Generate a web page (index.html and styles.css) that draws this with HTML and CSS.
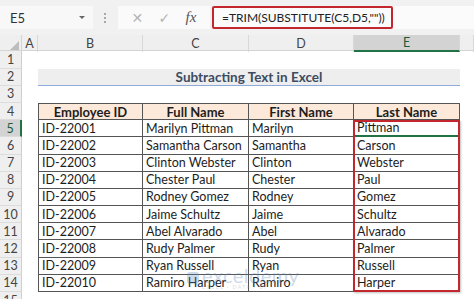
FILE: index.html
```html
<!DOCTYPE html>
<html lang="en">
<head>
  <meta charset="UTF-8">
  <meta name="viewport" content="width=device-width, initial-scale=1.0">
  <title>Subtracting Text in Excel</title>
  <link rel="stylesheet" href="styles.css">
</head>
<body>
  <div class="formula-bar">
    <div class="name-box">
      <span>E5</span>
      <span class="caret"></span>
    </div>
    <div class="grip"><i></i><i></i><i></i></div>
    <div class="fx-buttons">
      <span class="btn-x">&#x2715;</span>
      <span class="btn-ok">&#x2713;</span>
      <span class="btn-fx">fx</span>
    </div>
    <div class="formula-input">
      <span class="formula">=TRIM(SUBSTITUTE(C5,D5,""))</span>
    </div>
  </div>

  <div class="sheet">
    <div class="row col-heads">
      <div class="corner"><span></span></div>
      <div class="ch">A</div>
      <div class="ch">B</div>
      <div class="ch">C</div>
      <div class="ch">D</div>
      <div class="ch active">E</div>
      <div class="ch"></div>
    </div>

    <div class="row"><div class="rh">1</div></div>
    <div class="row">
      <div class="rh">2</div><div></div>
      <div class="title">Subtracting Text in Excel</div>
    </div>
    <div class="row"><div class="rh">3</div></div>

    <div class="row">
      <div class="rh">4</div><div></div>
      <div class="cell head first">Employee ID</div>
      <div class="cell head">Full Name</div>
      <div class="cell head">First Name</div>
      <div class="cell head">Last Name</div>
    </div>
    <div class="row">
      <div class="rh active">5</div><div></div>
      <div class="cell first">ID-22001</div>
      <div class="cell">Marilyn Pittman</div>
      <div class="cell">Marilyn</div>
      <div class="cell selected">Pittman</div>
    </div>
    <div class="row">
      <div class="rh">6</div><div></div>
      <div class="cell first">ID-22002</div>
      <div class="cell">Samantha Carson</div>
      <div class="cell">Samantha</div>
      <div class="cell">Carson</div>
    </div>
    <div class="row">
      <div class="rh">7</div><div></div>
      <div class="cell first">ID-22003</div>
      <div class="cell">Clinton Webster</div>
      <div class="cell">Clinton</div>
      <div class="cell">Webster</div>
    </div>
    <div class="row">
      <div class="rh">8</div><div></div>
      <div class="cell first">ID-22004</div>
      <div class="cell">Chester Paul</div>
      <div class="cell">Chester</div>
      <div class="cell">Paul</div>
    </div>
    <div class="row">
      <div class="rh">9</div><div></div>
      <div class="cell first">ID-22005</div>
      <div class="cell">Rodney Gomez</div>
      <div class="cell">Rodney</div>
      <div class="cell">Gomez</div>
    </div>
    <div class="row">
      <div class="rh">10</div><div></div>
      <div class="cell first">ID-22006</div>
      <div class="cell">Jaime Schultz</div>
      <div class="cell">Jaime</div>
      <div class="cell">Schultz</div>
    </div>
    <div class="row">
      <div class="rh">11</div><div></div>
      <div class="cell first">ID-22007</div>
      <div class="cell">Abel Alvarado</div>
      <div class="cell">Abel</div>
      <div class="cell">Alvarado</div>
    </div>
    <div class="row">
      <div class="rh">12</div><div></div>
      <div class="cell first">ID-22008</div>
      <div class="cell">Rudy Palmer</div>
      <div class="cell">Rudy</div>
      <div class="cell">Palmer</div>
    </div>
    <div class="row">
      <div class="rh">13</div><div></div>
      <div class="cell first">ID-22009</div>
      <div class="cell">Ryan Russell</div>
      <div class="cell">Ryan</div>
      <div class="cell">Russell</div>
    </div>
    <div class="row">
      <div class="rh">14</div><div></div>
      <div class="cell first">ID-22010</div>
      <div class="cell">Ramiro Harper</div>
      <div class="cell">Ramiro</div>
      <div class="cell">Harper</div>
    </div>
    <div class="row"><div class="rh">15</div></div>

    <!-- annotation over the result column -->
    <div class="highlight"></div>

    <div class="watermark">
      <span class="wm-logo"></span>
      <div class="wm-text">
        <span class="wm-name">exceldemy</span>
        <span class="wm-sub">EXCEL &middot; DATA &middot; BI</span>
      </div>
    </div>
  </div>
</body>
</html>
```

FILE: styles.css
```css
body {
  margin: 0;
  font-family: 'Lato', 'Liberation Sans', sans-serif;
  background-color: #fff;
  color: #1d1d1d;
  width: 474px;
  height: 299px;
  overflow: hidden;
}

/* formula bar */
.formula-bar {
  height: 35px;
  box-sizing: border-box;
  padding: 6px 0 6px 0;
  background-color: #f1f1f1;
  display: flex;
  align-items: stretch;
}

.name-box {
  width: 93px;
  background-color: #f8f8f8;
  display: flex;
  align-items: center;
  justify-content: space-between;
  padding: 0 8px 0 10px;
  box-sizing: border-box;
  font-size: 13px;
  color: #333;
}

.caret {
  width: 0;
  height: 0;
  border-left: 3px solid transparent;
  border-right: 3px solid transparent;
  border-top: 3px solid #666;
}

.grip {
  width: 24px;
  display: flex;
  flex-direction: column;
  align-items: center;
  justify-content: center;
  gap: 2px;
}

.grip i {
  width: 2px;
  height: 2px;
  background-color: #a8a8a8;
}

.fx-buttons {
  width: 92px;
  margin-left: 1px;
  background-color: #fafafa;
  display: flex;
  align-items: center;
  justify-content: space-around;
  padding: 0 6px;
  box-sizing: border-box;
}

.btn-x, .btn-ok {
  color: #b5b5b5;
  font-size: 14px;
  font-family: 'DejaVu Sans', sans-serif;
}

.btn-fx {
  font-family: 'Liberation Serif', serif;
  font-style: italic;
  font-size: 15px;
  color: #555;
}

.formula-input {
  flex: 1;
  margin-left: 2px;
  background-color: #fbfbfb;
  display: flex;
  align-items: stretch;
}

.formula {
  border: 2px solid #c4262e;
  border-radius: 2px;
  padding: 0 6px 0 8px;
  display: flex;
  align-items: center;
  font-size: 12px;
  color: #222;
  white-space: nowrap;
}

/* sheet */
.sheet {
  position: relative;
}

.row {
  display: grid;
  grid-template-columns: 22px 16px 105px 106px 105px 106px 1fr;
  height: 17.2px;
  font-size: 12.5px;
}

.col-heads {
  height: 16.4px;
  background-color: #efefef;
  border-bottom: 1px solid #d4d4d4;
  box-sizing: border-box;
  font-size: 12.5px;
  color: #444;
}

.corner {
  position: relative;
  border-right: 1px solid #d4d4d4;
}

.corner span {
  position: absolute;
  right: 2px;
  bottom: 2px;
  width: 0;
  height: 0;
  border-left: 9px solid transparent;
  border-bottom: 9px solid #bdbdbd;
}

.ch {
  display: flex;
  align-items: center;
  justify-content: center;
  border-right: 1px solid #d8d8d8;
}

.ch.active {
  background-color: #d3d3d3;
  border-bottom: 2px solid #217346;
  color: #1f5c3a;
}

.rh {
  background-color: #efefef;
  border-right: 1px solid #cfcfcf;
  border-bottom: 1px solid #dcdcdc;
  box-sizing: border-box;
  display: flex;
  align-items: center;
  justify-content: center;
  color: #444;
  font-size: 12.5px;
}

.rh.active {
  background-color: #d3d3d3;
  border-right: 2px solid #217346;
  color: #1f5c3a;
}

.title {
  grid-column: 3 / span 4;
  background-color: #eeeeee;
  border-bottom: 1px solid #8eaadb;
  box-sizing: border-box;
  display: flex;
  align-items: center;
  justify-content: center;
  font-weight: bold;
  font-size: 13.5px;
  color: #3d4c61;
}

.cell {
  border-right: 1px solid #555;
  border-bottom: 1px solid #555;
  box-sizing: border-box;
  padding-left: 3px;
  display: flex;
  align-items: center;
  white-space: nowrap;
  overflow: hidden;
}

.cell.first {
  border-left: 1px solid #555;
}

.cell.head {
  background-color: #fde9d9;
  border-top: 1px solid #555;
  font-weight: bold;
  justify-content: center;
  padding-left: 0;
  font-size: 13px;
}

.cell.selected {
  border-bottom: 2px solid #217346;
}

.highlight {
  position: absolute;
  left: 353px;
  top: 84.5px;
  width: 107px;
  height: 172.5px;
  border: 2px solid #c4262e;
  box-sizing: border-box;
  box-shadow: 1px 1px 2px rgba(0, 0, 0, 0.25);
  pointer-events: none;
}

.watermark {
  position: absolute;
  left: 187px;
  top: 230px;
  display: flex;
  align-items: center;
  gap: 3px;
  opacity: 0.3;
  pointer-events: none;
}

.wm-logo {
  width: 12px;
  height: 12px;
  border-radius: 3px;
  background-color: #5b86b8;
}

.wm-text {
  display: flex;
  flex-direction: column;
  line-height: 1;
}

.wm-name {
  font-size: 20px;
  color: #5b86b8;
  letter-spacing: 0.5px;
}

.wm-sub {
  font-size: 5px;
  color: #7a8ea8;
  letter-spacing: 1.5px;
}
```
